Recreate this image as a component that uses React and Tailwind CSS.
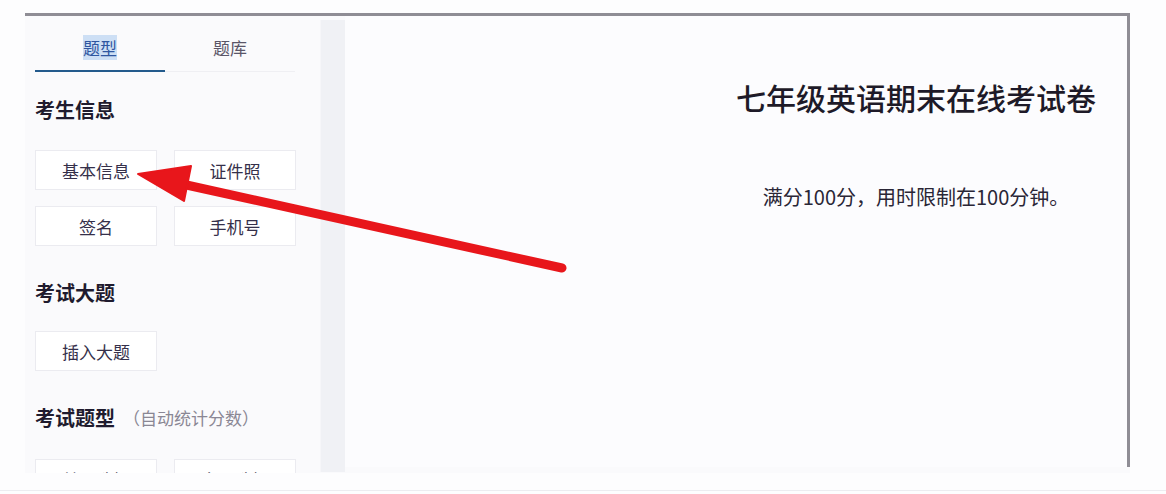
import React from "react";

function Btn({ children }) {
  return (
    <div className="h-[40px] flex items-center justify-center bg-white border border-[#ebebf0] text-[17px] text-[#35304a] leading-none">
      {children}
    </div>
  );
}

function Heading({ children, extra, className = "" }) {
  return (
    <div className={"flex items-center h-[26px] " + className}>
      <span className="text-[20px] font-bold text-[#1f1b2e] leading-[26px]">{children}</span>
      {extra && (
        <span className="ml-[8px] text-[17px] text-[#8a8794] leading-[26px]">{extra}</span>
      )}
    </div>
  );
}

export default function App() {
  return (
    <div className="relative w-[1166px] h-[494px] bg-[#fdfdfe] overflow-hidden font-['Noto_Sans_CJK_SC','Noto_Sans',sans-serif]">
      <div className="pt-[13px] pl-[25px]">
        <div className="flex w-[1105px] h-[460px] border-t-[3px] border-[#8f8d95] overflow-hidden bg-[#fafafc]">
          {/* Left panel */}
          <aside className="w-[295px] shrink-0 pl-[10px]">
            <div className="flex w-[260px]">
              <div className="w-[130px] h-[56px] pt-[20px] text-center border-b-2 border-[#235a8c]">
                <span className="text-[17px] leading-[24px] text-[#2f56a0] bg-[#cddff5]">题型</span>
              </div>
              <div className="w-[130px] h-[56px] pt-[20px] text-center border-b border-[#efeff3]">
                <span className="text-[17px] leading-[24px] text-[#5a5668]">题库</span>
              </div>
            </div>

            <Heading className="mt-[25px]">考生信息</Heading>
            <div className="mt-[27px] grid grid-cols-[122px_122px] gap-x-[17px] gap-y-[16px]">
              <Btn>基本信息</Btn>
              <Btn>证件照</Btn>
              <Btn>签名</Btn>
              <Btn>手机号</Btn>
            </div>

            <Heading className="mt-[34px]">考试大题</Heading>
            <div className="mt-[25px] grid grid-cols-[122px_122px] gap-x-[17px]">
              <Btn>插入大题</Btn>
            </div>

            <Heading className="mt-[34px]" extra="（自动统计分数）">考试题型</Heading>
            <div className="mt-[28px] grid grid-cols-[122px_122px] gap-x-[17px]">
              <Btn>单项选择</Btn>
              <Btn>多项选择</Btn>
            </div>
          </aside>

          {/* Scroll strip */}
          <div className="w-[25px] shrink-0 mt-[4px] h-[452px] bg-[#f0f1f5] border-l border-[#f6f6f9]" />

          {/* Main paper area */}
          <main className="flex-1 h-[451px] border-r-[3px] border-[#8f8d95] bg-[#fcfcfe]">
            <div className="ml-auto w-[422px] pt-[61px] text-center">
              <div className="text-[30px] leading-[40px] font-medium text-[#1e1a28]">
                七年级英语期末在线考试卷
              </div>
              <div className="mt-[66px] text-[20px] leading-[28px] text-[#2a2636]">
                满分100分，用时限制在100分钟。
              </div>
            </div>
          </main>
        </div>
      </div>
      <div className="mt-[17px] h-px bg-[#ececf0]" />

      {/* Red annotation arrow */}
      <svg
        className="absolute inset-0 pointer-events-none"
        width="1166"
        height="494"
        viewBox="0 0 1166 494"
      >
        <line
          x1="182"
          y1="184"
          x2="562"
          y2="268"
          stroke="#e8161b"
          strokeWidth="9"
          strokeLinecap="round"
        />
        <polygon points="138,174 191,166 184,201" fill="#e8161b" stroke="#e8161b" strokeWidth="2" strokeLinejoin="round" />
      </svg>
    </div>
  );
}
